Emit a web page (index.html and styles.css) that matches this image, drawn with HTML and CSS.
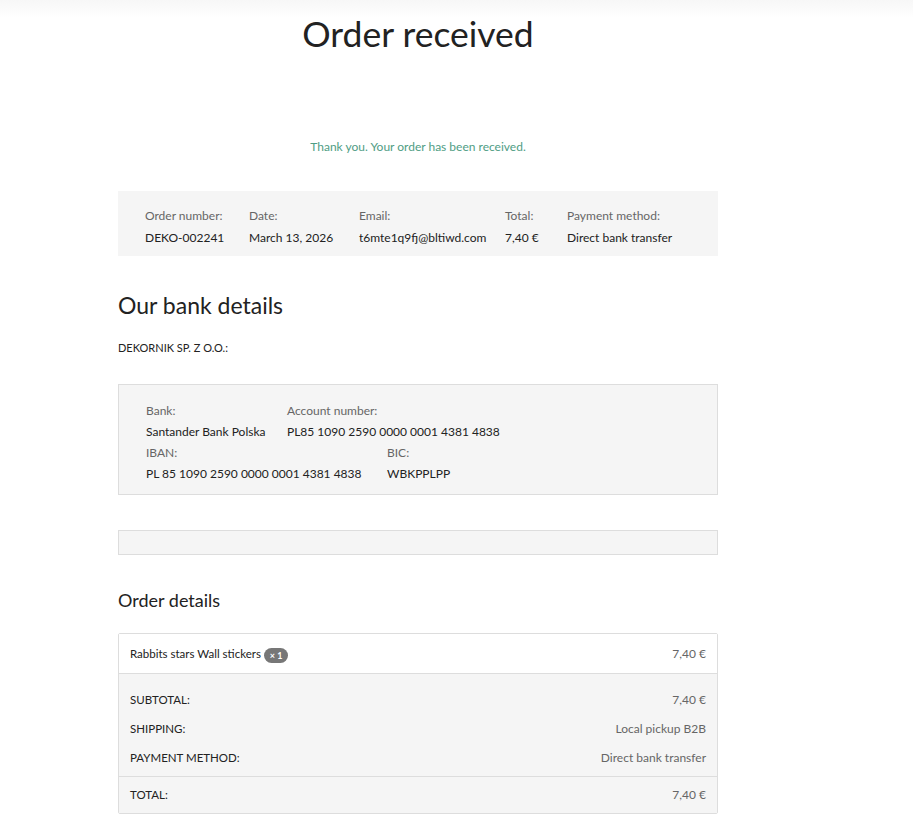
FILE: index.html
```html
<!DOCTYPE html>
<html lang="en">
<head>
<meta charset="utf-8">
<title>Order received</title>
<link rel="stylesheet" href="styles.css">
</head>
<body>
<div class="top-shade"></div>
<main class="page">
  <h1 class="page-title">Order received</h1>

  <p class="notice">Thank you. Your order has been received.</p>

  <ul class="overview">
    <li><span class="ov-label">Order number:</span><strong>DEKO-002241</strong></li>
    <li><span class="ov-label">Date:</span><strong>March 13, 2026</strong></li>
    <li><span class="ov-label">Email:</span><strong>t6mte1q9fj@bltiwd.com</strong></li>
    <li><span class="ov-label">Total:</span><strong>7,40 €</strong></li>
    <li><span class="ov-label">Payment method:</span><strong>Direct bank transfer</strong></li>
  </ul>

  <h2 class="section-title">Our bank details</h2>
  <h3 class="account-name">DEKORNIK SP. Z O.O.:</h3>

  <div class="bank-box">
    <ul class="bank-row">
      <li><span class="ov-label">Bank:</span><strong>Santander Bank Polska</strong></li>
      <li><span class="ov-label">Account number:</span><strong>PL85 1090 2590 0000 0001 4381 4838</strong></li>
    </ul>
    <ul class="bank-row">
      <li><span class="ov-label">IBAN:</span><strong>PL 85 1090 2590 0000 0001 4381 4838</strong></li>
      <li><span class="ov-label">BIC:</span><strong>WBKPPLPP</strong></li>
    </ul>
  </div>

  <div class="empty-box"></div>

  <h2 class="details-title">Order details</h2>

  <table class="order-table">
    <tbody>
      <tr class="item-row">
        <td>Rabbits stars Wall stickers <span class="qty">× 1</span></td>
        <td class="num">7,40 €</td>
      </tr>
    </tbody>
    <tfoot>
      <tr class="first"><th>Subtotal:</th><td class="num">7,40 €</td></tr>
      <tr><th>Shipping:</th><td class="num">Local pickup B2B</td></tr>
      <tr class="last"><th>Payment method:</th><td class="num">Direct bank transfer</td></tr>
      <tr class="total"><th>Total:</th><td class="num">7,40 €</td></tr>
    </tfoot>
  </table>
</main>
</body>
</html>
```

FILE: styles.css
```css
html, body {
  margin: 0;
  padding: 0;
  background: #fff;
}

body {
  font-family: "Lato", "Open Sans", sans-serif;
  color: #222;
  font-size: 12px;
}

.top-shade {
  height: 18px;
  background: linear-gradient(#f7f7f7, #fff);
}

.page {
  width: 600px;
  margin-left: 118px;
  margin-top: -18px;
  padding-bottom: 20px;
}

.page-title {
  margin: 0;
  padding-top: 12px;
  text-align: center;
  font-size: 35.5px;
  font-weight: 400;
  line-height: 44px;
  color: #222;
}

.notice {
  margin: 83px 0 0;
  text-align: center;
  color: #4f9d84;
  font-size: 12px;
  line-height: 16px;
}

.overview {
  list-style: none;
  margin: 36px 0 0;
  padding: 16px 27px 10px;
  background: #f5f5f5;
  display: flex;
}

.overview li {
  display: flex;
  flex-direction: column;
  gap: 5px;
  line-height: 17px;
}

.overview li:nth-child(1) { width: 104px; }
.overview li:nth-child(2) { width: 110px; }
.overview li:nth-child(3) { width: 146px; }
.overview li:nth-child(4) { width: 62px; }

.ov-label {
  color: #666;
  font-size: 12px;
}

.overview strong,
.bank-row strong {
  font-weight: 400;
  color: #222;
  font-size: 12px;
}

.section-title {
  margin: 34px 0 0;
  font-size: 23px;
  font-weight: 400;
  line-height: 30px;
  color: #222;
}

.account-name {
  margin: 20px 0 0;
  font-size: 11px;
  font-weight: 400;
  line-height: 16px;
  color: #222;
}

.bank-box {
  margin-top: 28px;
  border: 1px solid #ddd;
  background: #f5f5f5;
  padding: 17px 27px 8px;
}

.bank-row {
  list-style: none;
  margin: 0;
  padding: 0;
  display: flex;
}

.bank-row li {
  display: flex;
  flex-direction: column;
  gap: 4px;
  line-height: 17px;
  margin-bottom: 4px;
}

.bank-row:first-child li:first-child { width: 141px; }
.bank-row:last-child li:first-child { width: 241px; }

.empty-box {
  margin-top: 35px;
  height: 23px;
  border: 1px solid #ddd;
  background: #f5f5f5;
}

.details-title {
  margin: 32px 0 0;
  font-size: 18px;
  font-weight: 400;
  line-height: 26px;
  color: #222;
}

.order-table {
  margin-top: 20px;
  width: 100%;
  border-collapse: separate;
  border-spacing: 0;
  border: 1px solid #ddd;
  border-radius: 2px;
  font-size: 12px;
}

.order-table td,
.order-table th {
  padding: 0 11px;
  text-align: left;
  font-weight: 400;
  line-height: 29px;
}

.order-table .num {
  text-align: right;
  color: #666;
}

.item-row td {
  line-height: 39px;
  border-bottom: 1px solid #ddd;
  background: #fff;
}

.item-row td:first-child {
  color: #222;
  font-size: 11.5px;
}

.qty {
  display: inline-block;
  background: #777;
  color: #fff;
  font-size: 9px;
  line-height: 15px;
  padding: 0 6px;
  border-radius: 8px;
  vertical-align: middle;
  font-weight: 700;
}

.order-table tfoot {
  background: #f5f5f5;
}

.order-table tfoot th {
  text-transform: uppercase;
  color: #222;
  font-size: 11.5px;
}

.order-table tfoot tr.first th,
.order-table tfoot tr.first td {
  padding-top: 11px;
}

.order-table tfoot tr.last th,
.order-table tfoot tr.last td {
  padding-bottom: 4px;
}

.order-table tfoot tr.total th,
.order-table tfoot tr.total td {
  border-top: 1px solid #ddd;
  line-height: 36px;
}
```
